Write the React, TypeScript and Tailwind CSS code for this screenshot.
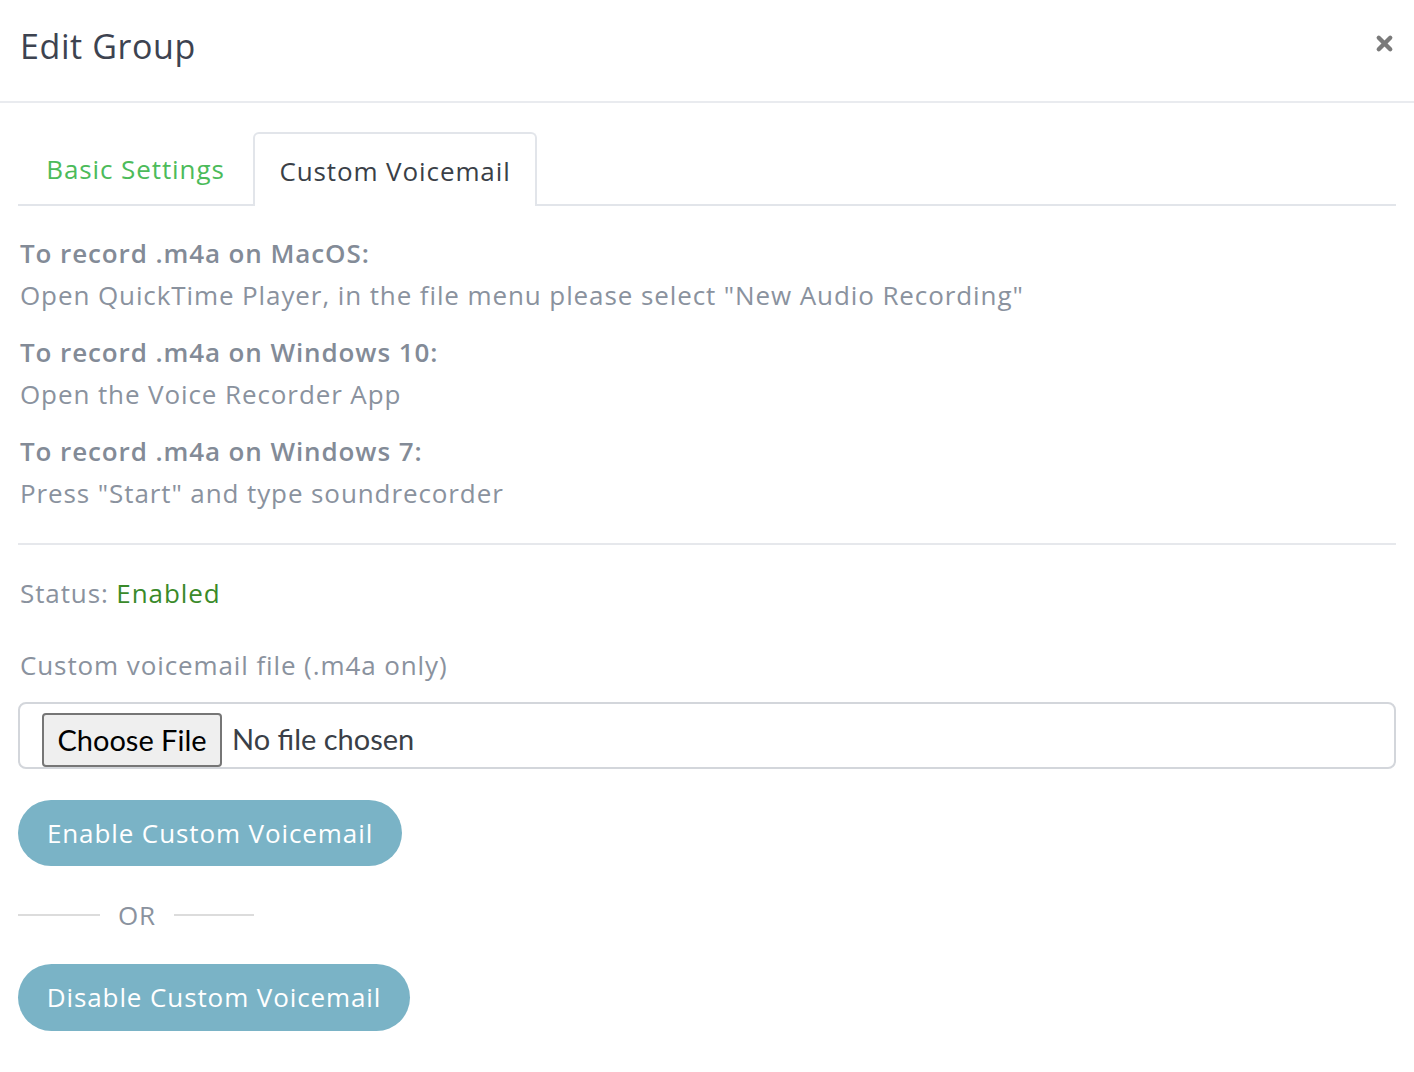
import { X } from 'lucide-react';

const sysFont = { fontFamily: 'Lato, "Noto Sans", sans-serif', letterSpacing: 0 };

function Instruction({ title, body }: { title: string; body: string }) {
  return (
    <div className="mb-[15px]">
      <div className="font-semibold text-[#838b97] leading-[42px]">{title}</div>
      <div className="text-[#8a929e] leading-[42px]">{body}</div>
    </div>
  );
}

export default function App() {
  return (
    <div className="w-[1414px] h-[1072px] bg-white text-[26px] font-['Open_Sans',sans-serif] tracking-[0.9px]">
      {/* Header */}
      <div className="flex items-center justify-between h-[103px] border-b-2 border-[#e9ebef] pl-[20px] pr-[18px]">
        <h1 className="text-[34px] text-[#3d4350] leading-none -mt-[10px] tracking-[0.6px]">Edit Group</h1>
        <X className="w-[23px] h-[23px] text-[#7a7a7a] -mt-[14px]" strokeWidth={4.5} />
      </div>

      <div className="px-[18px] pt-[29px]">
        {/* Tabs */}
        <div className="flex border-b-2 border-[#e2e5ea] h-[74px]">
          <button className="w-[235px] text-center text-[#4cbb5a] leading-none pt-[2px]">Basic Settings</button>
          <button className="w-[284px] text-center text-[#3a3f47] bg-white border-2 border-b-0 border-[#e2e5ea] rounded-t-[6px] -mb-[2px] leading-none pt-[2px]">
            Custom Voicemail
          </button>
        </div>

        {/* Instructions */}
        <div className="pl-[2px] pt-[26px] pb-[14px]">
          <Instruction title="To record .m4a on MacOS:" body={'Open QuickTime Player, in the file menu please select "New Audio Recording"'} />
          <Instruction title="To record .m4a on Windows 10:" body="Open the Voice Recorder App" />
          <Instruction title="To record .m4a on Windows 7:" body={'Press "Start" and type soundrecorder'} />
        </div>

        <div className="border-t-2 border-[#e6e8ec]" />

        <div className="pl-[2px] pt-[27px] text-[#8a929e] leading-[42px]">
          Status: <span className="text-[#3a8a2a]">Enabled</span>
        </div>

        <div className="pl-[2px] pt-[30px] text-[#8a929e] leading-[42px]">Custom voicemail file (.m4a only)</div>

        <div className="mt-[16px] h-[67px] border-2 border-[#d3d6db] rounded-[8px] flex items-center pl-[22px]">
          <span className="mt-[8px] h-[54px] w-[180px] justify-center flex items-center border-2 border-[#767676] rounded-[4px] bg-[#efefef] text-black text-[29px]" style={sysFont}>
            Choose File
          </span>
          <span className="mt-[6px] ml-[10px] text-[#3a3f47] text-[29px]" style={sysFont}>No file chosen</span>
        </div>

        <button className="mt-[31px] h-[66px] w-[384px] rounded-full bg-[#7ab3c6] text-white">Enable Custom Voicemail</button>

        <div className="flex items-center mt-[16px] h-[66px]">
          <div className="w-[82px] border-t-2 border-[#dcdcdc]" />
          <span className="mx-[18px] text-[#8a929e]">OR</span>
          <div className="w-[80px] border-t-2 border-[#dcdcdc]" />
        </div>

        <button className="mt-[16px] h-[67px] w-[392px] rounded-full bg-[#7ab3c6] text-white">Disable Custom Voicemail</button>
      </div>
    </div>
  );
}
